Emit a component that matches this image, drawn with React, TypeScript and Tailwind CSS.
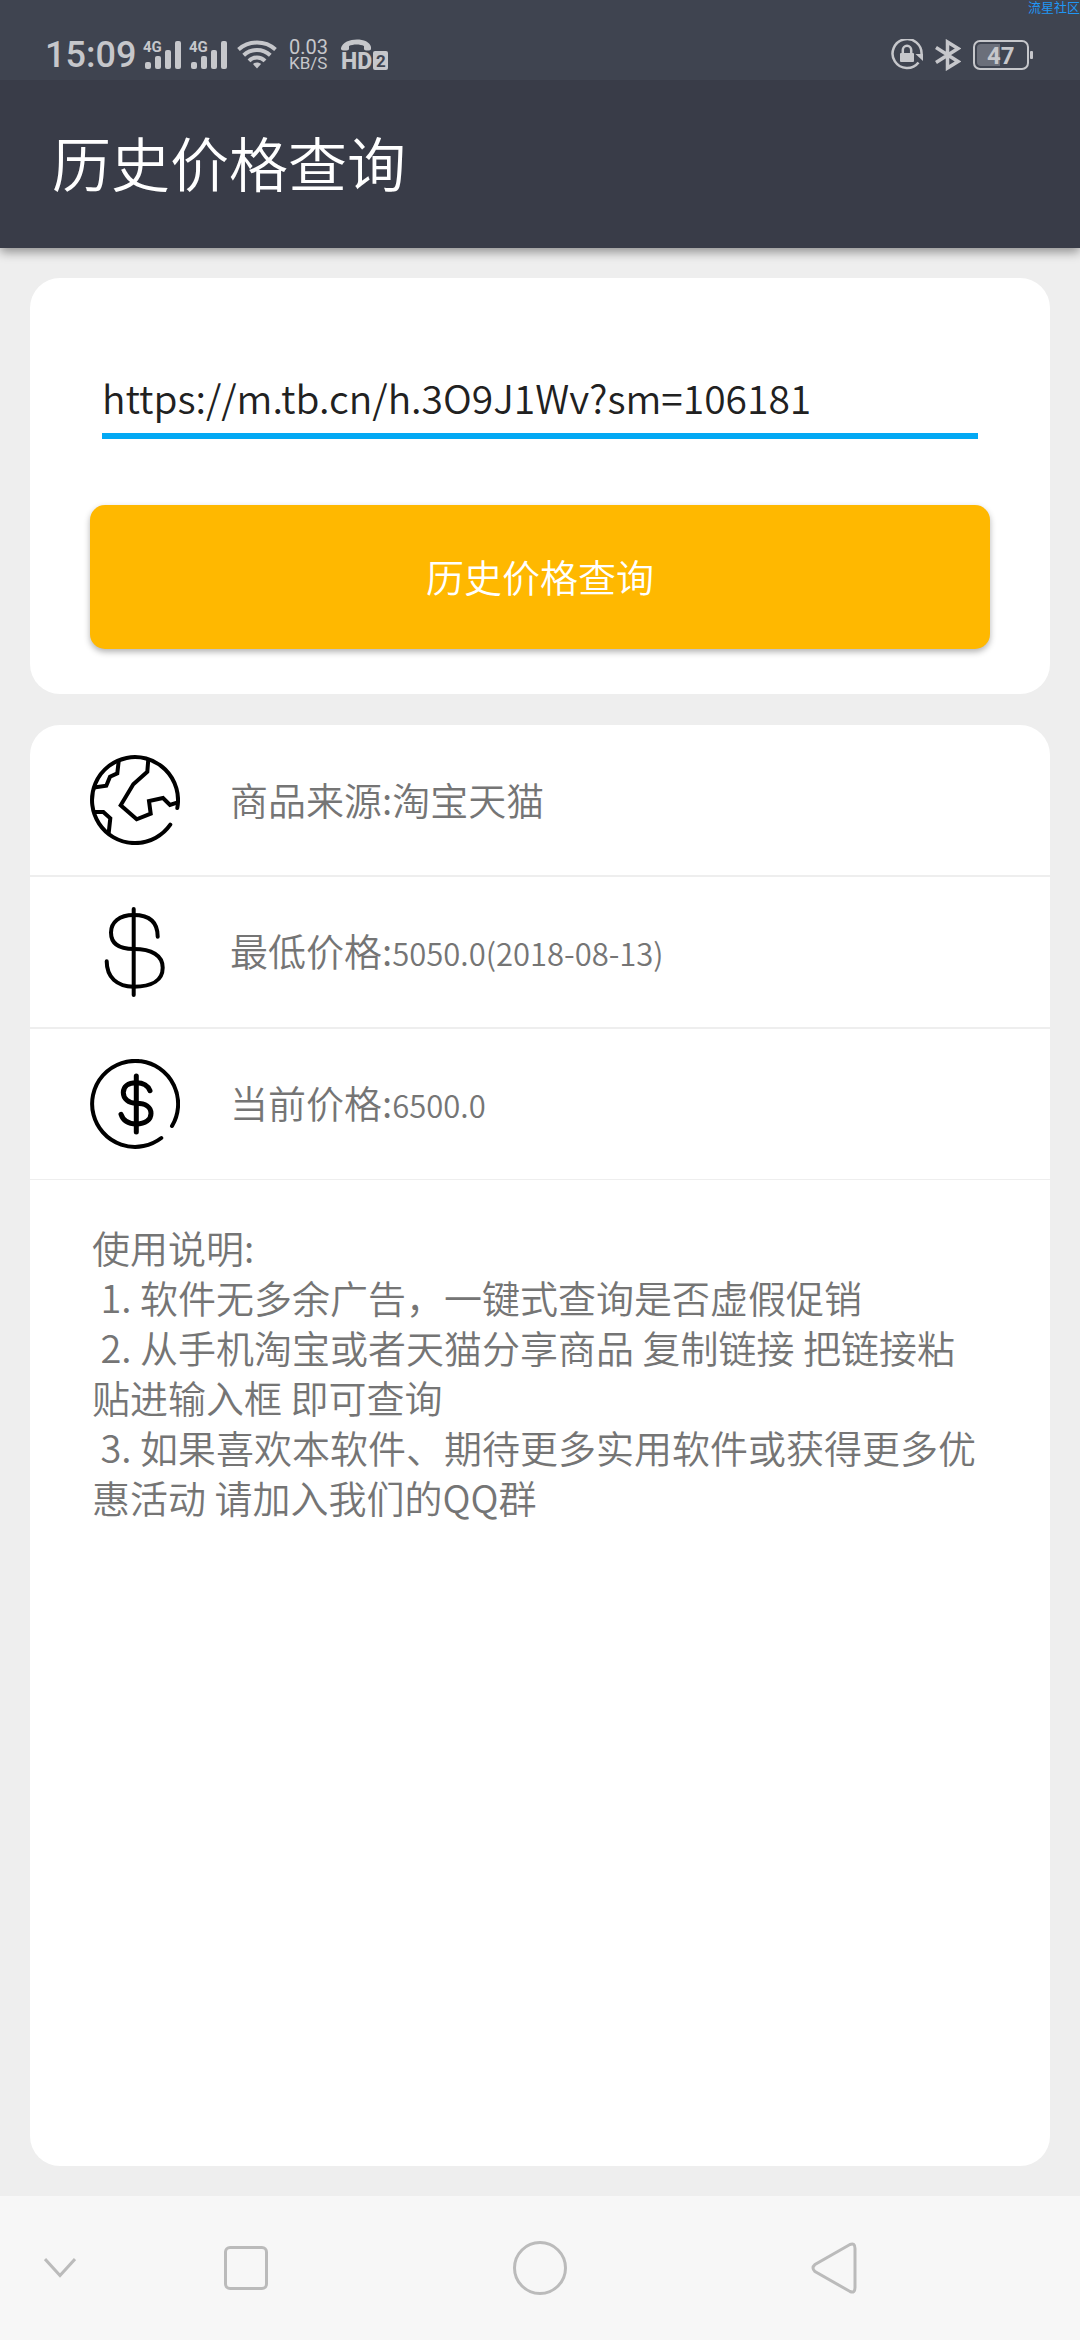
import { useState } from 'react';
import type { ReactNode } from 'react';

interface InfoRowProps {
  icon: ReactNode;
  label: string;
  value: string;
  numeric?: boolean;
}

const SignalIcon = () => (
  <svg className="w-[38px] h-[30px] overflow-visible" viewBox="0 0 38 30" fill="currentColor">
    <text x="0" y="12" fontSize="15" fontWeight="700">
      4G
    </text>
    <rect x="2" y="22" width="6" height="7" rx="2" />
    <rect x="12" y="16" width="6" height="13" rx="2" />
    <rect x="22" y="10" width="6" height="19" rx="2" />
    <rect x="32" y="1" width="6" height="28" rx="2" />
  </svg>
);

const WifiIcon = () => (
  <svg className="w-10 h-[30px]" viewBox="0 0 40 30" fill="none" stroke="currentColor" strokeWidth="4">
    <path d="M1.500 9.500C12 .2 28 .2 38.500 9.500" />
    <path d="M6.700 15.300c7.500-7 19-7 26.600 0" />
    <path d="M12 20.800c4.500-4.500 11.500-4.500 16 0" />
    <path d="M16 24c2-2 6-2 8 0l-4 4.500z" fill="currentColor" stroke="none" />
  </svg>
);

const HdCallIcon = () => (
  <svg className="w-12 h-8 overflow-visible" viewBox="0 0 48 32">
    <path
      d="M0 9C3-2 28-2 30 8v2c0 2-7 2-7 0V7c-4-2-11-2-15 0v3c0 2-8 2-8 0z"
      fill="currentColor"
    />
    <text x="0" y="30" fontSize="23" fontWeight="800" fill="currentColor">
      HD
    </text>
    <rect x="32" y="12" width="15" height="19" rx="2" fill="currentColor" />
    <text x="35" y="28" fontSize="17" fontWeight="700" fill="#3f4450">
      2
    </text>
  </svg>
);

const RotationLockIcon = () => (
  <svg className="w-8 h-8" viewBox="0 0 32 32" fill="none" stroke="currentColor">
    <path d="M27.500 23.500A14.500 14.500 0 1 1 30.500 16" strokeWidth="2.500" />
    <path d="M24.500 15h7.500v7z" fill="currentColor" stroke="none" />
    <rect x="9" y="14" width="14" height="9" rx="1" fill="currentColor" stroke="none" />
    <path d="M11.800 14v-3a4.200 4.200 0 0 1 8.400 0v3" strokeWidth="2.500" />
  </svg>
);

const BluetoothIcon = () => (
  <svg className="w-[26px] h-8" viewBox="0 0 26 32" fill="none" stroke="currentColor" strokeWidth="3.500">
    <path d="M1 8.500 23 22.500 12.500 29V3L23 9.500 1 23.500" />
  </svg>
);

const BatteryIcon = () => (
  <svg className="w-[60px] h-[30px]" viewBox="0 0 60 30">
    <rect x="1" y="1" width="54" height="28" rx="6" fill="none" stroke="currentColor" strokeWidth="2" />
    <path d="M27 4v22H8a4 4 0 0 1-4-4V8a4 4 0 0 1 4-4z" fill="#6b6f7a" />
    <rect x="57" y="11" width="3" height="8" rx="1" fill="currentColor" />
    <text x="14" y="24" fontSize="24" fontWeight="700" fill="currentColor">
      47
    </text>
  </svg>
);

const GlobeIcon = () => (
  <svg className="w-[90px] h-[90px]" viewBox="0 0 90 90" fill="none" stroke="#000" strokeWidth="4">
    <path d="M80.300 69.700A43 43 0 1 1 87.300 53" strokeLinecap="round" />
    <path d="M58.300 4.500 57.300 16.700 43.300 29.300 30.700 50.300 46.700 64.300 60.700 58.700 59 46 73 43 80 50 87 47.700" />
    <path d="M28.700 6 27.300 18.300 20 21.700 16.300 30.700 4 32.500" />
    <path d="M4 57h9.300l7 6.300L18.700 78" />
  </svg>
);

const DollarIcon = () => (
  <svg className="w-[90px] h-[90px]" viewBox="0 0 90 90" fill="none" stroke="#000" strokeWidth="4" strokeLinecap="round">
    <path d="M43.700 2v86" />
    <path d="M67.700 29.700C67.700 15 59 8 43.700 8 29 8 21 15.500 21 25.500 21 36.500 29 42 43.700 42c18 0 29 6.500 29 18.700 0 12-10 19-29 19-17 0-27-9.700-27-25.400" />
  </svg>
);

const CoinIcon = () => (
  <svg className="w-[90px] h-[90px]" viewBox="0 0 90 90" fill="none" stroke="#000" strokeWidth="4" strokeLinecap="round">
    <path d="M71.300 79A43 43 0 1 1 82 67" />
    <g strokeWidth="5">
      <path d="M46.300 17v56" />
      <path d="M60 31.700c-2-5-6.500-8-13.700-8-8.500 0-13 3.800-13 9.800s5 10.800 13 10.800c9.500 0 14.700 4 14.700 10.200S55.500 65 46.300 65C38.500 65 33 61.500 31 55.300" />
    </g>
  </svg>
);

const StatusBar = () => (
  <div className="relative h-20 pt-[30px] pl-[45px] pr-[47px] flex items-center justify-between bg-[#3f4450] text-[#c6c7cb] font-[Roboto,sans-serif]">
    <div className="flex items-center">
      <span className="w-[98px] text-[36px] leading-10 font-medium">15:09</span>
      <SignalIcon />
      <span className="ml-2 flex">
        <SignalIcon />
      </span>
      <span className="ml-2.5 flex">
        <WifiIcon />
      </span>
      <span className="ml-3 w-10 flex flex-col font-normal">
        <span className="text-[20px] leading-[16px]">0.03</span>
        <span className="text-[17px] leading-[16px]">KB/S</span>
      </span>
      <span className="ml-3 flex">
        <HdCallIcon />
      </span>
    </div>
    <div className="flex items-center gap-3">
      <RotationLockIcon />
      <BluetoothIcon />
      <BatteryIcon />
    </div>
    <span className="absolute top-0 right-0 text-[13px] leading-[13px] font-normal text-[#2196f3] font-['Noto_Sans_CJK_SC',sans-serif]">
      流星社区
    </span>
  </div>
);

const InfoRow = ({ icon, label, value, numeric = false }: InfoRowProps) => (
  <li className="h-[152px] px-[60px] flex items-center gap-[50px] border-b-2 border-[#eeeeee] last:border-b last:h-[151px]">
    {icon}
    <span className="pb-0.5 text-[38px] leading-[50px]">
      {label}:<span className={numeric ? 'text-[31px]' : ''}>{value}</span>
    </span>
  </li>
);

const NavBar = () => (
  <nav className="h-36 grid grid-cols-[99px_1fr_1fr_1fr_99px] bg-[#f7f7f7] text-[#bbbbbb]">
    <button aria-label="收起" className="flex items-center pl-11">
      <svg className="w-8 h-5" viewBox="0 0 32 20" fill="none" stroke="currentColor" strokeWidth="3">
        <path d="M1 1 16 17.500 31 1" />
      </svg>
    </button>
    <button aria-label="最近任务" className="flex items-center justify-center">
      <span className="w-11 h-11 rounded-md border-[3px] border-[#bbbbbb]" />
    </button>
    <button aria-label="主页" className="flex items-center justify-center">
      <span className="w-[54px] h-[54px] rounded-full border-[3px] border-[#bbbbbb]" />
    </button>
    <button aria-label="返回" className="flex items-center justify-center">
      <svg className="w-[46px] h-[52px]" viewBox="0 0 46 52" fill="none" stroke="currentColor" strokeWidth="3">
        <path d="M39 2.500 4 22.500q-4 3.500 0 7l35 20q5 2 5-4v-39q0-6-5-4z" />
      </svg>
    </button>
  </nav>
);

const App = () => {
  const [link, setLink] = useState('https://m.tb.cn/h.3O9J1Wv?sm=106181');

  return (
    <div className="min-h-screen flex flex-col bg-[#eeeeee] font-['Noto_Sans_CJK_SC',sans-serif] font-[350]">
      <StatusBar />
      <header className="h-42 px-[52px] pb-1 flex items-center bg-[#393c48] text-white shadow-[0_4px_10px_rgba(0,0,0,0.4)]">
        <h1 className="text-[59px] leading-[72px]">历史价格查询</h1>
      </header>

      <main className="flex-1 p-[30px] flex flex-col gap-[31px]">
        <form
          className="pt-[90px] pb-[45px] px-[60px] rounded-[30px] bg-white"
          onSubmit={(e) => e.preventDefault()}
        >
          <div className="px-3">
            <input
              aria-label="商品链接"
              value={link}
              onChange={(e) => setLink(e.target.value)}
              className="block w-full h-[71px] pb-2 border-b-[6px] border-[#03a9f4] text-[39px] text-[#212121] outline-none"
            />
          </div>
          <button
            type="submit"
            className="mt-[66px] pb-1 w-full h-36 rounded-[15px] bg-[#ffb800] text-white text-[38px] shadow-[0_3px_6px_rgba(0,0,0,0.3)]"
          >
            历史价格查询
          </button>
        </form>

        <section className="flex-1 rounded-[30px] bg-white text-[#757575]">
          <ul>
            <InfoRow icon={<GlobeIcon />} label="商品来源" value="淘宝天猫" />
            <InfoRow icon={<DollarIcon />} label="最低价格" value="5050.0(2018-08-13)" numeric />
            <InfoRow icon={<CoinIcon />} label="当前价格" value="6500.0" numeric />
          </ul>
          <div className="pt-[42px] pl-[62px] pr-[66px] text-[38px] leading-[50px] whitespace-pre-wrap">
            <p>使用说明:</p>
            <p>{' 1. 软件无多余广告，一键式查询是否虚假促销'}</p>
            <p>{' 2. 从手机淘宝或者天猫分享商品 复制链接 把链接粘贴进输入框 即可查询'}</p>
            <p>{' 3. 如果喜欢本软件、期待更多实用软件或获得更多优惠活动 请加入我们的QQ群'}</p>
          </div>
        </section>
      </main>

      <NavBar />
    </div>
  );
};

export default App;
